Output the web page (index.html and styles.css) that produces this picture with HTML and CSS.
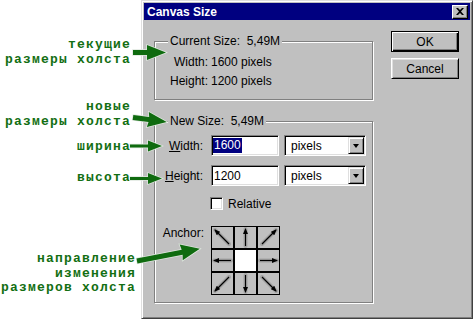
FILE: index.html
```html
<!DOCTYPE html>
<html lang="ru">
<head>
    <meta charset="UTF-8">
    <title>Canvas Size</title>
    <link rel="stylesheet" href="styles.css">
</head>
<body>
    <svg class="defs" width="0" height="0">
        <defs>
            <marker id="head" viewBox="0 0 6 5" refX="5" refY="2.5" markerWidth="6" markerHeight="5" markerUnits="userSpaceOnUse" orient="auto">
                <path d="M0,0 L6,2.5 L0,5 z" fill="#000"/>
            </marker>
        </defs>
    </svg>

    <div class="page">
        <div class="notes">
            <p class="note note-current">текущие<br>размеры холста</p>
            <p class="note note-new">новые<br>размеры холста</p>
            <p class="note note-width">ширина</p>
            <p class="note note-height">высота</p>
            <p class="note note-anchor">направление<br>изменения<br>размеров холста</p>
        </div>

        <div class="dialog">
            <div class="titlebar">
                <span class="title">Canvas Size</span>
                <span class="close-btn">
                    <svg width="8" height="7" viewBox="0 0 8 7">
                        <path d="M0,0 h2 l2,2 l2,-2 h2 l-3,3.5 l3,3.5 h-2 l-2,-2 l-2,2 h-2 l3,-3.5 z" fill="#000"/>
                    </svg>
                </span>
            </div>

            <div class="dialog-body">
                <div class="groups">
                    <fieldset class="group group-current">
                        <legend>Current Size: &nbsp;5,49M</legend>
                        <div class="current-body">
                            <span class="label">Width:</span><span>1600 pixels</span>
                            <span class="label">Height:</span><span>1200 pixels</span>
                        </div>
                    </fieldset>

                    <fieldset class="group group-new">
                        <legend>New Size: &nbsp;5,49M</legend>
                        <div class="new-body">
                            <div class="field-row">
                                <span class="field-label"><u>W</u>idth:</span>
                                <div class="text-box"><span class="selected">1600</span></div>
                                <div class="select-box"><span>pixels</span><span class="drop-btn"><i class="tri"></i></span></div>
                            </div>
                            <div class="field-row row-height">
                                <span class="field-label"><u>H</u>eight:</span>
                                <div class="text-box"><span class="plain">1200</span></div>
                                <div class="select-box"><span>pixels</span><span class="drop-btn"><i class="tri"></i></span></div>
                            </div>
                            <div class="check-row">
                                <span class="checkbox"></span>
                                <span>Relative</span>
                            </div>
                            <div class="anchor-row">
                                <span class="field-label">Anchor:</span>
                                <div class="anchor-grid">
                                    <div class="cell"><svg viewBox="0 0 21 21"><line class="sh" x1="17" y1="17" x2="3" y2="3"/><line class="ar" x1="17" y1="17" x2="3" y2="3"/></svg></div>
                                    <div class="cell"><svg viewBox="0 0 21 21"><line class="sh" x1="10.5" y1="19" x2="10.5" y2="2"/><line class="ar" x1="10.5" y1="19" x2="10.5" y2="2"/></svg></div>
                                    <div class="cell"><svg viewBox="0 0 21 21"><line class="sh" x1="4" y1="17" x2="18" y2="3"/><line class="ar" x1="4" y1="17" x2="18" y2="3"/></svg></div>
                                    <div class="cell"><svg viewBox="0 0 21 21"><line class="sh" x1="19" y1="10.5" x2="2" y2="10.5"/><line class="ar" x1="19" y1="10.5" x2="2" y2="10.5"/></svg></div>
                                    <div class="cell cell-center"></div>
                                    <div class="cell"><svg viewBox="0 0 21 21"><line class="sh" x1="2" y1="10.5" x2="19" y2="10.5"/><line class="ar" x1="2" y1="10.5" x2="19" y2="10.5"/></svg></div>
                                    <div class="cell"><svg viewBox="0 0 21 21"><line class="sh" x1="17" y1="4" x2="3" y2="18"/><line class="ar" x1="17" y1="4" x2="3" y2="18"/></svg></div>
                                    <div class="cell"><svg viewBox="0 0 21 21"><line class="sh" x1="10.5" y1="2" x2="10.5" y2="19"/><line class="ar" x1="10.5" y1="2" x2="10.5" y2="19"/></svg></div>
                                    <div class="cell"><svg viewBox="0 0 21 21"><line class="sh" x1="4" y1="4" x2="18" y2="18"/><line class="ar" x1="4" y1="4" x2="18" y2="18"/></svg></div>
                                </div>
                            </div>
                        </div>
                    </fieldset>
                </div>

                <div class="buttons">
                    <div class="btn btn-default">OK</div>
                    <div class="btn">Cancel</div>
                </div>
            </div>
        </div>

        <!-- стрелки-выноски поверх диалога -->
        <svg class="callouts" width="473" height="319" viewBox="0 0 473 319">
            <g class="callout">
                <polygon points="133,50 147,50 147,45 166,52.5 147,60 147,55 133,55"/>
                <polygon transform="translate(133 117.5) rotate(7.5)" points="0,-2.5 16,-2.5 15,-7.5 34,0 15,7.5 16,2.5 0,2.5"/>
                <polygon transform="translate(130 146)" points="0,-1.5 18,-1.5 18,-5.5 32,0 18,5.5 18,1.5 0,1.5"/>
                <polygon transform="translate(130 178.5)" points="0,-1.5 18,-1.5 18,-5.5 32,0 18,5.5 18,1.5 0,1.5"/>
                <polygon transform="translate(137 261) rotate(-11)" points="0,-2.5 46,-2.5 45,-8 64,0 45,8 46,2.5 0,2.5"/>
            </g>
        </svg>
    </div>
</body>
</html>
```
FILE: styles.css
```css
* {
    box-sizing: border-box;
}

body {
    margin: 0;
    background: #fff;
    font-family: "Liberation Sans", Arial, sans-serif;
    font-size: 12px;
    color: #000;
}

.defs {
    position: absolute;
}

.page {
    position: relative;
    display: flex;
    width: 473px;
    height: 319px;
    overflow: hidden;
}

/* подписи слева */
.notes {
    width: 141px;
    flex-shrink: 0;
    padding: 37px 11px 0 0;
    font-family: "Liberation Mono", "Courier New", monospace;
    font-weight: bold;
    font-size: 13px;
    letter-spacing: 1.2px;
    line-height: 15px;
    color: #136f13;
    text-align: right;
    white-space: nowrap;
}

.note {
    margin: 0;
    margin-right: -1px;
}

.note-new {
    margin-top: 32px;
}

.note-width {
    margin-top: 10px;
}

.note-height {
    margin-top: 16px;
}

.note-anchor {
    margin-top: 67px;
    margin-right: -6px;
    line-height: 14.5px;
}

.callouts {
    position: absolute;
    left: 0;
    top: 0;
    pointer-events: none;
}

.callout polygon {
    fill: #0f6b0f;
    stroke: #dfe8df;
    stroke-width: 1.5;
    paint-order: stroke;
}

/* диалог */
.dialog {
    width: 332px;
    height: 319px;
    padding: 2px;
    background: #c0c0c0;
    border-top: 1px solid #dfdfdf;
    border-left: 1px solid #dfdfdf;
    border-right: 1px solid #404040;
    border-bottom: 1px solid #404040;
    box-shadow: inset 1px 1px 0 #fff, inset -1px -1px 0 #808080;
}

.titlebar {
    display: flex;
    align-items: center;
    justify-content: space-between;
    height: 17px;
    padding: 0 2px 0 3px;
    background: #000080;
}

.title {
    color: #fff;
    font-weight: bold;
    font-size: 12px;
}

.close-btn {
    display: flex;
    align-items: center;
    justify-content: center;
    width: 16px;
    height: 14px;
    background: #c0c0c0;
    border: 1px solid;
    border-color: #fff #000 #000 #fff;
    box-shadow: inset -1px -1px 0 #808080;
}

.dialog-body {
    display: flex;
    padding: 11px 10px 0 10px;
}

.groups {
    width: 219px;
    margin-top: 3px;
}

.group {
    width: 219px;
    margin: 0;
    padding: 0;
    border: 1px solid #808080;
    box-shadow: inset 1px 1px 0 #fff, 1px 1px 0 #fff;
}

.group legend {
    margin-left: 13px;
    padding: 0 2px;
    line-height: 14px;
    background: #c0c0c0;
}

.current-body {
    display: grid;
    grid-template-columns: 53px auto;
    column-gap: 3px;
    padding: 5px 0 8px 0;
    line-height: 19px;
}

.label {
    text-align: right;
}

.group-new {
    margin-top: 14px;
}

.new-body {
    padding: 7px 0 7px 0;
}

.field-row {
    display: flex;
    align-items: center;
    height: 21px;
}

.row-height {
    margin-top: 9px;
}

.field-label {
    width: 48px;
    margin-right: 8px;
    text-align: right;
    line-height: 14px;
}

.text-box,
.select-box {
    height: 21px;
    background: #fff;
    border: 1px solid;
    border-color: #808080 #fff #fff #808080;
    box-shadow: inset 1px 1px 0 #000, inset -1px -1px 0 #dfdfdf;
    display: flex;
    align-items: center;
}

.text-box {
    width: 68px;
    margin-right: 5px;
    padding-left: 1px;
}

.selected {
    background: #000080;
    color: #fff;
    padding: 0 1px;
    line-height: 15px;
}

.plain {
    padding-left: 1px;
}

.select-box {
    width: 82px;
    padding: 1px;
    padding-left: 6px;
    justify-content: space-between;
}

.drop-btn {
    display: flex;
    align-items: center;
    justify-content: center;
    width: 16px;
    height: 17px;
    background: #c0c0c0;
    border: 1px solid;
    border-color: #dfdfdf #000 #000 #dfdfdf;
    box-shadow: inset 1px 1px 0 #fff, inset -1px -1px 0 #808080;
}

.tri {
    width: 0;
    height: 0;
    border-left: 3.5px solid transparent;
    border-right: 3.5px solid transparent;
    border-top: 4px solid #000;
}

.check-row {
    display: flex;
    align-items: center;
    margin-top: 11px;
    margin-left: 55px;
    height: 13px;
}

.checkbox {
    width: 13px;
    height: 13px;
    margin-right: 5px;
    background: #fff;
    border: 1px solid;
    border-color: #808080 #fff #fff #808080;
    box-shadow: inset 1px 1px 0 #000, inset -1px -1px 0 #dfdfdf;
}

.anchor-row {
    display: flex;
    align-items: flex-start;
    margin-top: 16px;
}

.anchor-row .field-label {
    width: 49px;
    margin-right: 7px;
}

.anchor-grid {
    display: grid;
    grid-template-columns: repeat(3, 21px);
    grid-auto-rows: 21px;
    gap: 2px;
    padding: 1px;
    width: 69px;
    background: #000;
}

.cell {
    background: #c0c0c0;
}

.cell svg {
    display: block;
    width: 21px;
    height: 21px;
}

.cell-center {
    background: #fff;
}

.cell .sh {
    stroke: #8c8c8c;
    stroke-width: 4;
    stroke-linecap: round;
    opacity: 0.55;
}

.cell .ar {
    stroke: #000;
    stroke-width: 1.2;
    marker-end: url(#head);
}

/* кнопки */
.buttons {
    display: flex;
    flex-direction: column;
    gap: 6px;
    width: 68px;
    margin-left: 18px;
}

.btn {
    display: flex;
    align-items: center;
    justify-content: center;
    height: 21px;
    background: #c0c0c0;
    border: 1px solid;
    border-color: #fff #000 #000 #fff;
    box-shadow: inset 1px 1px 0 #dfdfdf, inset -1px -1px 0 #808080;
}

.btn-default {
    border-color: #000;
    box-shadow: inset 1px 1px 0 #fff, inset -1px -1px 0 #000, inset -2px -2px 0 #808080;
}
```
